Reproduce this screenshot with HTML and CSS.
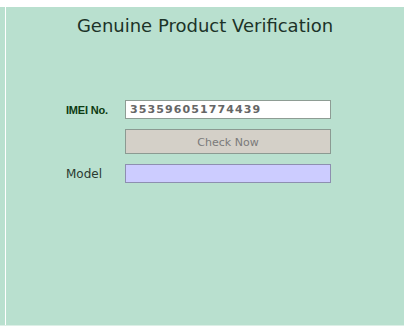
FILE: index.html
```html
<!DOCTYPE html>
<html>
<head>
<meta charset="utf-8">
<link rel="stylesheet" href="styles.css">
</head>
<body>
<div class="frame">
  <div class="gutter"></div>
  <div class="sep"></div>
  <div class="panel">
    <h1 class="title">Genuine Product Verification</h1>
    <div class="form">
      <div class="row">
        <label class="label label-bold">IMEI No.</label>
        <div class="field field-white">353596051774439</div>
      </div>
      <div class="row">
        <span class="label"></span>
        <div class="btn">Check Now</div>
      </div>
      <div class="row">
        <label class="label label-plain">Model</label>
        <div class="field field-blue"></div>
      </div>
    </div>
  </div>
</div>
</body>
</html>
```
FILE: styles.css
```css
html, body {
  margin: 0;
  padding: 0;
  background: #ffffff;
}
body {
  padding-top: 7px;
  font-family: "DejaVu Sans", Verdana, sans-serif;
}
.frame {
  display: flex;
  width: 404px;
  height: 318px;
  border-bottom: 1px solid #dcefe6;
}
.gutter {
  width: 5px;
  background: #b9e0cf;
}
.sep {
  width: 1px;
  background: #ffffff;
}
.panel {
  flex: 1;
  background: #b9e0cf;
  display: flex;
  flex-direction: column;
}
.title {
  margin: 0;
  padding-top: 8px;
  text-align: center;
  font-size: 18px;
  font-weight: normal;
  color: #1c3328;
  line-height: 22px;
}
.form {
  margin-top: 63px;
  display: flex;
  flex-direction: column;
  gap: 10px;
  padding-left: 60px;
}
.row {
  display: flex;
  align-items: center;
}
.label {
  width: 59px;
  font-size: 12px;
}
.label-bold {
  font-family: "Liberation Sans", Arial, sans-serif;
  font-weight: bold;
  font-size: 11px;
  color: #0d3b12;
  letter-spacing: -0.2px;
}
.label-plain {
  font-family: "DejaVu Sans", Verdana, sans-serif;
  color: #2a3a30;
  font-size: 12px;
}
.field {
  box-sizing: border-box;
  width: 206px;
  height: 19px;
  border: 1px solid #8e9c94;
}
.field-white {
  background: #ffffff;
  font-size: 11px;
  font-weight: bold;
  color: #666666;
  line-height: 17px;
  padding-left: 4px;
  letter-spacing: 1.1px;
}
.field-blue {
  background: #ccccff;
  border-color: #8d8fb0;
}
.btn {
  box-sizing: border-box;
  width: 206px;
  height: 25px;
  border: 1px solid #8b9a92;
  background: #d4d0c8;
  color: #7a7a7a;
  font-size: 11px;
  text-align: center;
  line-height: 25px;
}
```
